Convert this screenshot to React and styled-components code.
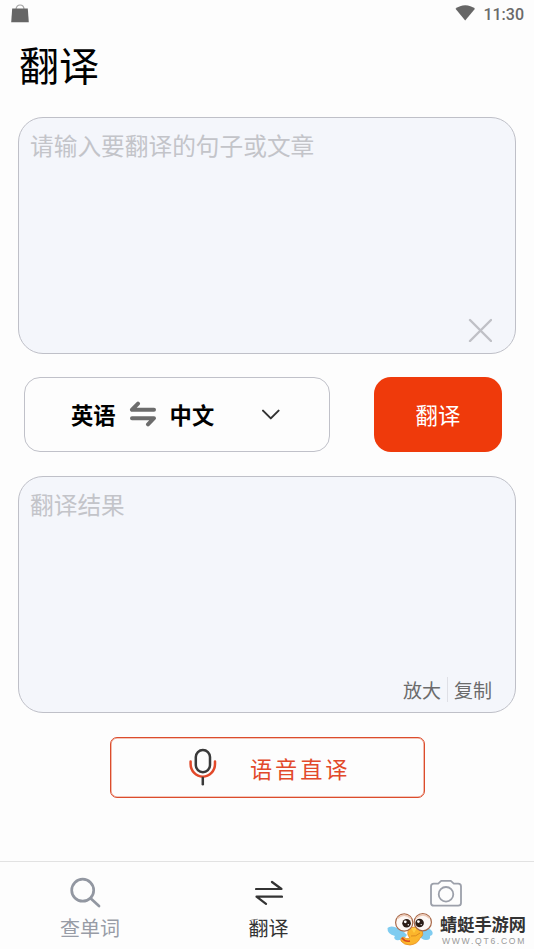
import React from "react";
import styled, { createGlobalStyle } from "styled-components";

const tabs = [
  { label: "查单词", icon: <SearchIcon /> },
  { label: "翻译", icon: <SwapIcon />, active: true },
  { label: "", icon: <CameraIcon /> },
];

export default function App() {
  return (
    <StyledScreen>
      <GlobalStyle />
      <StyledStatusBar>
        <BagIcon />
        <StyledStatusRight>
          <WifiIcon />
          <StyledClock>11:30</StyledClock>
        </StyledStatusRight>
      </StyledStatusBar>
      <StyledTitle>翻译</StyledTitle>
      <StyledPanel>
        <StyledPlaceholder>请输入要翻译的句子或文章</StyledPlaceholder>
        <StyledClear aria-label="清空">
          <CloseIcon />
        </StyledClear>
      </StyledPanel>
      <StyledControls>
        <StyledLanguages>
          <span>英语</span>
          <ExchangeIcon />
          <span>中文</span>
          <ChevronIcon />
        </StyledLanguages>
        <StyledSubmit>翻译</StyledSubmit>
      </StyledControls>
      <StyledPanel>
        <StyledPlaceholder>翻译结果</StyledPlaceholder>
        <StyledActions>
          <StyledAction>放大</StyledAction>
          <StyledDivider />
          <StyledAction>复制</StyledAction>
        </StyledActions>
      </StyledPanel>
      <StyledVoice>
        <MicIcon />
        <StyledVoiceLabel>语音直译</StyledVoiceLabel>
      </StyledVoice>
      <StyledNav>
        {tabs.map((tab, index) => (
          <StyledTab key={index} $active={tab.active}>
            {tab.icon}
            <span>{tab.label}</span>
          </StyledTab>
        ))}
      </StyledNav>
      <StyledWatermark>
        <DragonflyLogo />
        <StyledBrand>
          <StyledBrandName>蜻蜓手游网</StyledBrandName>
          <StyledBrandUrl>WWW.QT6.COM</StyledBrandUrl>
        </StyledBrand>
      </StyledWatermark>
    </StyledScreen>
  );
}

function BagIcon() {
  return (
    <svg width="18" height="19" viewBox="0 0 18 19">
      <path d="M5 5.5C5 -0.5 13 -0.5 13 5.5" fill="none" stroke="#a5a5a5" strokeWidth="1.2" />
      <path d="M1.2 4.5H16.8L17.8 18.2H0.2Z" fill="#666" />
    </svg>
  );
}

function WifiIcon() {
  return (
    <svg width="20" height="16" viewBox="0 0 20 16">
      <path d="M0.5 3.8C6 -1.1 14.5 -1.1 20 3.8L10.2 15.6Z" fill="#666" />
    </svg>
  );
}

function CloseIcon() {
  return (
    <svg width="24" height="24" viewBox="0 0 24 24" fill="none" stroke="#bfc0c6" strokeWidth="2.4" strokeLinecap="round">
      <path d="M2 2L23 23M23 2L2 23" />
    </svg>
  );
}

function ExchangeIcon() {
  return (
    <svg width="28" height="26" viewBox="0 0 28 26" fill="none" stroke="#6c6c6c" strokeWidth="4" strokeLinecap="round" strokeLinejoin="round">
      <path d="M9 2.6L3 8.7H25" />
      <path d="M3 17.2H25L19 23.3" />
    </svg>
  );
}

function ChevronIcon() {
  return (
    <svg width="18" height="12" viewBox="0 0 18 12" fill="none" stroke="#333" strokeWidth="2" strokeLinecap="round" strokeLinejoin="round">
      <path d="M1 2.6L8.8 10.4L16.6 2.6" />
    </svg>
  );
}

function MicIcon() {
  return (
    <svg width="28" height="38" viewBox="0 0 28 38" fill="none" strokeWidth="2.5" strokeLinecap="round">
      <path d="M1.6 13.5V16A12.2 12.7 0 0 0 26 16V13.5" stroke="#e2492a" />
      <rect x="6.8" y="2" width="14.2" height="22.3" rx="7.1" stroke="#3a3a3a" />
      <path d="M13.8 30V36.3" stroke="#3a3a3a" />
    </svg>
  );
}

function SearchIcon() {
  return (
    <svg width="32" height="32" viewBox="0 0 32 32" fill="none" stroke="#9297a1" strokeWidth="2.7" strokeLinecap="round">
      <circle cx="13.7" cy="13.2" r="11" />
      <path d="M21.8 21.5L30 29" />
    </svg>
  );
}

function SwapIcon() {
  return (
    <svg width="28" height="32" viewBox="0 0 28 32" fill="none" stroke="#333" strokeWidth="2.2" strokeLinecap="round" strokeLinejoin="round">
      <path d="M1 12H26.5L17 5" />
      <path d="M27 19.7H1.5L11 26.8" />
    </svg>
  );
}

function CameraIcon() {
  return (
    <svg width="32" height="32" viewBox="0 0 32 32" fill="none" stroke="#9ca0aa" strokeWidth="1.8" strokeLinejoin="round">
      <path d="M3.8 6.6H8.2L11.2 3.9H20.8L23.8 6.6H28.2Q31 6.6 31 9.4V26Q31 28.7 28.2 28.7H3.8Q1 28.7 1 26V9.4Q1 6.6 3.8 6.6Z" />
      <circle cx="16" cy="17.3" r="7.3" />
    </svg>
  );
}

function DragonflyLogo() {
  return (
    <svg width="53" height="36" viewBox="0 0 53 36">
      <g fill="#7fccf0">
        <path d="M0.5 17Q4 13 15 19L20 24Q16 30 9 29Q6 27 8 25Q0 23 0.5 17Z" />
        <path d="M32 18Q40 14 45 20Q47 24 43 25Q44 29 39 29Q35 29 31 24Z" />
      </g>
      <path
        d="M22 18Q28 14 34 18Q38 24 33 27Q31 33 23 34Q17 34 14 30Q13 27 16 26Q20 29 23 27Q19 23 22 18Z"
        fill="#fbb52c"
        stroke="#e98a1c"
        strokeWidth="0.8"
      />
      <path d="M15 27Q18 31 23 30" fill="none" stroke="#d9481e" strokeWidth="1.6" />
      <path d="M24 25Q29 26 33 22" fill="none" stroke="#dd8a1d" strokeWidth="1" />
      <path d="M24 17L27 22L30 17Z" fill="#ffce42" />
      <circle cx="17.2" cy="11.5" r="8.6" fill="#fdf8f5" stroke="#a86848" strokeWidth="1.2" />
      <circle cx="35.8" cy="11.2" r="8.6" fill="#fdf8f5" stroke="#a86848" strokeWidth="1.2" />
      <path d="M10.5 7.5Q17 1 24 7.5M29 7.2Q36 0.7 42.5 7.2" fill="none" stroke="#ecc9b6" strokeWidth="1.4" />
      <circle cx="19.6" cy="12.2" r="4.3" fill="#2b1d17" />
      <circle cx="32.6" cy="12" r="4.3" fill="#2b1d17" />
      <circle cx="18.3" cy="10.8" r="1.4" fill="#fff" />
      <circle cx="31.4" cy="10.6" r="1.4" fill="#fff" />
      <circle cx="21.3" cy="13.8" r="0.7" fill="#fff" />
      <circle cx="34.2" cy="13.6" r="0.7" fill="#fff" />
    </svg>
  );
}

const GlobalStyle = createGlobalStyle`
  body {
    margin: 0;
    background: #fdfdfd;
  }
  * {
    box-sizing: border-box;
  }
  button {
    padding: 0;
    border: none;
    background: none;
    font-family: inherit;
  }
  svg {
    display: block;
    flex-shrink: 0;
  }
`;

const StyledScreen = styled.main`
  position: relative;
  display: flex;
  flex-direction: column;
  width: 534px;
  height: 949px;
  overflow: hidden;
  background: #fdfdfd;
  font-family: "Noto Sans CJK SC", sans-serif;
`;

const StyledStatusBar = styled.div`
  display: flex;
  justify-content: space-between;
  height: 28px;
  padding: 4px 10px 0 11px;
`;

const StyledStatusRight = styled.div`
  display: flex;
  align-items: flex-start;
  gap: 8px;
  padding-top: 1px;
`;

const StyledClock = styled.span`
  font-family: Roboto, sans-serif;
  font-size: 16px;
  font-weight: 500;
  line-height: 19px;
  color: #6a6a6a;
`;

const StyledTitle = styled.h1`
  height: 72px;
  margin: 0 0 17px;
  padding-left: 19px;
  font-size: 40px;
  font-weight: 400;
  line-height: 72px;
  color: #000;
`;

const StyledPanel = styled.section`
  display: flex;
  flex-direction: column;
  justify-content: space-between;
  height: 237px;
  margin: 0 18px;
  padding: 9px 23px 10px 11px;
  border: 1px solid #bfc0c8;
  border-radius: 25px;
  background: #f4f6fb;
`;

const StyledPlaceholder = styled.p`
  margin: 0;
  font-size: 23.7px;
  line-height: 36px;
  color: #c3c4c9;
`;

const StyledClear = styled.button`
  align-self: flex-end;
  margin-bottom: 1px;
`;

const StyledControls = styled.div`
  display: flex;
  justify-content: space-between;
  margin: 23px 32px 24px 24px;
`;

const StyledLanguages = styled.div`
  display: flex;
  align-items: center;
  width: 306px;
  height: 75px;
  padding: 0 49px 2px 46px;
  border: 1px solid #c0c1c9;
  border-radius: 16px;
  font-size: 22.3px;
  font-weight: 700;
  color: #000;
  gap: 13px;

  svg:last-child {
    margin-left: auto;
  }
`;

const StyledSubmit = styled.button`
  width: 128px;
  height: 75px;
  padding-bottom: 2px;
  border-radius: 17px;
  background: #ef3a0b;
  font-size: 22.4px;
  color: #fff;
`;

const StyledActions = styled.div`
  display: flex;
  justify-content: flex-end;
  align-items: center;
  height: 26px;
`;

const StyledAction = styled.button`
  padding-top: 2px;
  font-size: 19px;
  line-height: 26px;
  color: #6b6b6b;
`;

const StyledDivider = styled.span`
  width: 1px;
  height: 25px;
  margin: 0 6px;
  background: #dfe0e6;
`;

const StyledVoice = styled.button`
  display: flex;
  align-items: center;
  align-self: center;
  gap: 33px;
  width: 315px;
  height: 61px;
  margin: 24px 0 0 1px;
  padding: 0 0 2px 78px;
  border: 1px solid #dc4c2c;
  border-radius: 7px;
  box-shadow: inset 0 0 0 0.6px #ea8f78;
  color: #e2492a;
`;

const StyledVoiceLabel = styled.span`
  padding-top: 2px;
  font-size: 22.2px;
  letter-spacing: 2.9px;
`;

const StyledNav = styled.nav`
  display: grid;
  grid-template-columns: 180px 177px 177px;
  height: 88px;
  margin-top: auto;
  border-top: 1px solid #e2e2e2;
`;

const StyledTab = styled.div`
  display: flex;
  flex-direction: column;
  align-items: center;
  gap: 4px;
  padding-top: 15px;
  font-size: 20px;
  line-height: 30px;
  color: ${({ $active }) => ($active ? "#333" : "#989ca6")};

  &:first-child svg {
    margin-right: 11px;
  }
`;

/* site badge, floats over the camera tab */
const StyledWatermark = styled.div`
  position: absolute;
  right: 6px;
  bottom: 2px;
  display: flex;
  align-items: center;
  width: 141px;
`;

const StyledBrand = styled.div`
  display: flex;
  flex-direction: column;
  padding-top: 2px;
`;

const StyledBrandName = styled.span`
  font-family: "Liberation Sans", "Noto Sans CJK SC", sans-serif;
  font-size: 17.2px;
  font-weight: 700;
  line-height: 21px;
  color: #333;
`;

const StyledBrandUrl = styled.span`
  padding-left: 2px;
  font-family: "Liberation Sans", sans-serif;
  font-size: 8.6px;
  line-height: 10px;
  letter-spacing: 1.7px;
  white-space: nowrap;
  color: #999;
`;
